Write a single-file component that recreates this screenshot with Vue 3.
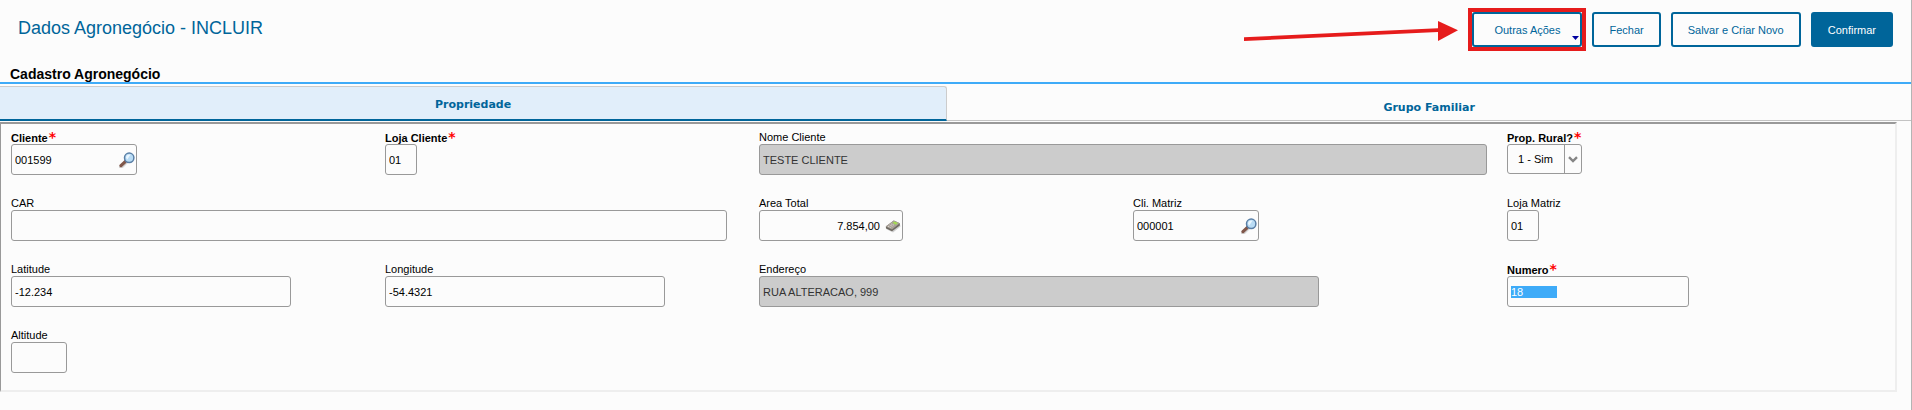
<script setup>
import { ref, onMounted } from "vue";

const tabs = ["Propriedade", "Grupo Familiar"]
const activeTab = ref("Propriedade")

const fields = ref([
    { id: "cliente", label: "Cliente", value: "001599", size: "w-code", required: true, icon: "search" },
    { id: "loja", label: "Loja Cliente", value: "01", size: "w-mini", required: true },
    { id: "nome", label: "Nome Cliente", value: "TESTE CLIENTE", size: "w-full", span: true, disabled: true },
    { id: "rural", label: "Prop. Rural?", value: "1 - Sim", size: "w-select", required: true, options: ["1 - Sim", "2 - Não"] },
    { id: "car", label: "CAR", value: "", size: "w-car", span: true },
    { id: "area", label: "Area Total", value: "7.854,00", size: "w-number", icon: "calc" },
    { id: "matriz", label: "Cli. Matriz", value: "000001", size: "w-code", icon: "search" },
    { id: "lojaMatriz", label: "Loja Matriz", value: "01", size: "w-mini" },
    { id: "latitude", label: "Latitude", value: "-12.234", size: "w-coord" },
    { id: "longitude", label: "Longitude", value: "-54.4321", size: "w-coord" },
    { id: "endereco", label: "Endereço", value: "RUA ALTERACAO, 999", size: "w-address", span: true, disabled: true },
    { id: "numero", label: "Numero", value: "18".padEnd(13), size: "w-numero", required: true },
    { id: "altitude", label: "Altitude", value: "", size: "w-alt" }
])

// the number field starts focused with its content selected
onMounted(() => {
    document.getElementById("numero").select()
})
</script>


<template>
    <div class="page">
        <header class="header">
            <h1>Dados Agronegócio - INCLUIR</h1>
            <div class="actions">
                <div class="highlight">
                    <button type="button" class="btn btn-menu">
                        Outras Ações
                        <svg class="caret" viewBox="0 0 7 4"><path d="M0 0h7L3.5 4z" fill="#0000a0" /></svg>
                    </button>
                    <svg class="arrow" viewBox="0 0 216 22">
                        <path d="M0 17.2L194 8.2L194 12L0 21z" fill="#e61c1c" />
                        <path d="M194 1L214 10.2L194 21z" fill="#e61c1c" />
                    </svg>
                </div>
                <button type="button" class="btn">Fechar</button>
                <button type="button" class="btn">Salvar e Criar Novo</button>
                <button type="button" class="btn btn-primary">Confirmar</button>
            </div>
        </header>

        <h2>Cadastro Agronegócio</h2>

        <!-- TABS -->
        <nav class="tabs">
            <button
                v-for="tab in tabs"
                :key="tab"
                type="button"
                class="tab"
                :class="{ active: tab === activeTab }"
                @click="activeTab = tab"
            >{{ tab }}</button>
        </nav>

        <!-- FORM -->
        <form class="panel" @submit.prevent>
            <div v-for="field in fields" :key="field.id" class="field" :class="{ span: field.span }">
                <label :for="field.id" :class="{ required: field.required }">{{ field.label }}<span v-if="field.required" class="star">*</span></label>
                <div class="control" :class="[field.size, { disabled: field.disabled }]">
                    <template v-if="field.options">
                        <select :id="field.id" v-model="field.value">
                            <option v-for="option in field.options" :key="option">{{ option }}</option>
                        </select>
                        <span class="chevron">
                            <svg viewBox="0 0 10 7"><path d="M1 1.2L5 5L9 1.2" fill="none" stroke="#858585" stroke-width="2.4" /></svg>
                        </span>
                    </template>
                    <input v-else type="text" :id="field.id" v-model="field.value" :disabled="field.disabled">
                    <button v-if="field.icon === 'search'" type="button" class="icon" aria-label="Pesquisar">
                        <svg viewBox="0 0 16 16">
                            <path d="M2 15L7.5 9.5" stroke="#d5d5d5" stroke-width="4" stroke-linecap="round" />
                            <path d="M6 9.5L7.5 8" stroke="#6d7480" stroke-width="2" />
                            <path d="M2 13.6L6 9.8" stroke="#80574a" stroke-width="3.2" stroke-linecap="round" />
                            <circle cx="10.2" cy="5.8" r="4.7" fill="#b9dcf5" stroke="#5a7fa6" stroke-width="1.5" />
                            <path d="M7 5.5A3.3 3.3 0 0 1 11.5 2.8L8.2 7.5z" fill="#eaf6ff" />
                        </svg>
                    </button>
                    <button v-if="field.icon === 'calc'" type="button" class="icon" aria-label="Calculadora">
                        <svg viewBox="0 0 16 16">
                            <path d="M1 11L8 14.5L15.5 8.5L15 6L8 12z" fill="#d0d0d0" />
                            <path d="M0.8 8.5L8.8 2.5L14.8 5.2V7.5L7 13.2L1 10.5z" fill="#6d6861" />
                            <path d="M0.8 8.5L8.8 2.5L14.8 5.2L7 11.4z" fill="#a9a198" />
                            <path d="M7.6 4.7L9.4 3.4L13 5L10.8 6.7z" fill="#a4dc52" />
                            <path d="M3 8.2L6.2 9.8M4.6 7L8 8.6M6.2 5.9L9.5 7.4" stroke="#d9d3cc" stroke-dasharray="1.2 0.6" />
                        </svg>
                    </button>
                </div>
            </div>
        </form>
    </div>
</template>


<style>
body {
  background-color: #fcfcfc;
}
</style>

<style scoped>
.page {
  box-sizing: border-box;
  min-height: 100vh;
  border-right: 1px solid #b4b4b4;
  background-color: #fcfcfc;
  font-family: Arial, "Liberation Sans", sans-serif;
  font-size: 11px;
  color: #000;
}

button,
input,
select {
  font: inherit;
}

.header {
  display: flex;
  justify-content: space-between;
  padding: 12px 18px 19px;
}

h1 {
  margin: 0;
  padding-top: 6px;
  font-size: 18px;
  font-weight: normal;
  line-height: 20px;
  color: #00659a;
}

.actions {
  display: flex;
  gap: 10px;
}

.btn {
  height: 35px;
  padding: 0 15px;
  border: 2px solid #00659a;
  border-radius: 3px;
  background-color: #fcfcfc;
  color: #00659a;
  cursor: pointer;
}

.btn-primary {
  background-color: #00659a;
  color: #fff;
}

.highlight {
  position: relative;
  outline: 4px solid #e61c1c;
}

.btn-menu {
  padding: 0 20px;
}

.caret {
  position: absolute;
  right: 3px;
  bottom: 7px;
  width: 7px;
  height: 4px;
}

.arrow {
  position: absolute;
  top: 8px;
  right: 122px;
  width: 216px;
  height: 22px;
}

h2 {
  margin: 0;
  padding-left: 10px;
  border-bottom: 2px solid #3eabf8;
  font-size: 14px;
  line-height: 16px;
}

.tabs {
  display: flex;
  height: 35px;
  margin-top: 2px;
}

.tab {
  flex: 55;
  padding: 8px 0 0;
  border: 0;
  border-bottom: 1px solid #c3c3c3;
  background: none;
  font-family: Verdana, "DejaVu Sans", sans-serif;
  font-weight: bold;
  color: #00659a;
  cursor: pointer;
}

.tab.active {
  flex: 54;
  padding: 2px 0 0;
  border-top: 1px solid #ccc;
  border-right: 1px solid #ccc;
  border-bottom: 2px solid #00659a;
  border-radius: 0 3px 0 0;
  background-color: #e1eefa;
}

.panel {
  display: grid;
  grid-template-columns: repeat(5, minmax(0, 1fr));
  gap: 21px 20px;
  margin: 1px 14px 0 0;
  padding: 6px 34px 17px 10px;
  border: 2px solid #eee;
  border-top-color: #999;
  border-left: 1px solid #999;
}

.field.span {
  grid-column: span 2;
}

label {
  display: block;
  height: 14px;
  line-height: 14px;
}

.required {
  font-weight: bold;
  line-height: 16px;
}

.star {
  margin-left: 1px;
  font-family: "DejaVu Sans", sans-serif;
  font-size: 14px;
  line-height: 0;
  color: #f00;
}

.control {
  box-sizing: border-box;
  display: flex;
  align-items: center;
  height: 31px;
  max-width: 100%;
  border: 1px solid #999;
  border-radius: 3px;
}

.control input {
  flex: 1;
  min-width: 0;
  padding: 0 3px;
  border: 0;
  outline: none;
  background: none;
  color: #000;
}

.control input::selection {
  background-color: #3eabf8;
  color: #fff;
}

.control.disabled {
  background-color: #ccc;
}

.control.disabled input {
  color: #333;
}

.w-full { width: 100%; }
.w-code { width: 126px; }
.w-mini { width: 32px; }
.w-car { width: 716px; }
.w-number { width: 144px; }
.w-coord { width: 280px; }
.w-address { width: 560px; }
.w-numero { width: 182px; }
.w-alt { width: 56px; }

.w-number input {
  padding-right: 5px;
  text-align: right;
}

.w-select {
  width: 75px;
  height: 30px;
}

.w-select select {
  flex: 1;
  align-self: stretch;
  min-width: 0;
  padding: 0 0 0 10px;
  border: 0;
  outline: none;
  background: none;
  color: #000;
  appearance: none;
}

.chevron {
  display: flex;
  align-items: center;
  align-self: stretch;
  padding: 0 3px;
  border-left: 1px solid #999;
  pointer-events: none;
}

.chevron svg {
  width: 10px;
  height: 7px;
}

.icon {
  flex: none;
  width: 16px;
  height: 16px;
  margin-right: 1px;
  padding: 0;
  border: 0;
  background: none;
  cursor: pointer;
}

.icon svg {
  display: block;
  width: 16px;
  height: 16px;
}
</style>
